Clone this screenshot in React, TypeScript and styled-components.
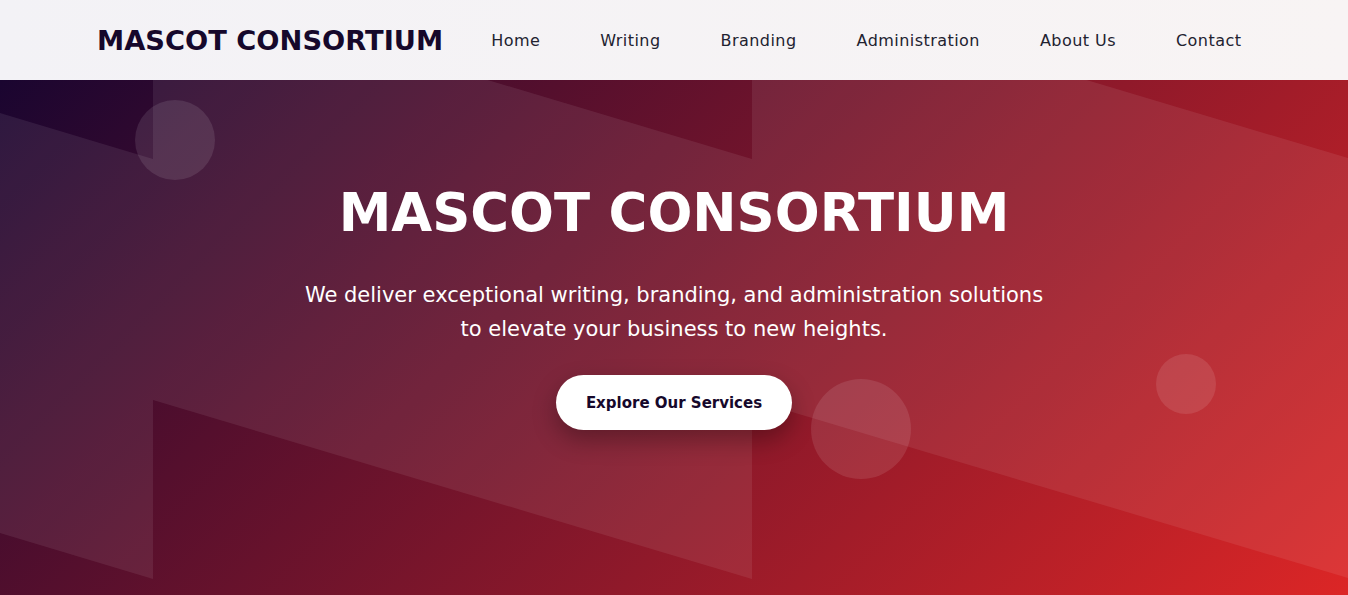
import React from 'react'
import styled, { createGlobalStyle } from 'styled-components'

const NAVY = '#16082b'

const GlobalStyle = createGlobalStyle`
  * {
    box-sizing: border-box;
  }
  body {
    margin: 0;
    font-family: 'DejaVu Sans', 'Open Sans', sans-serif;
    background: #f5f3f5;
  }
`

const Header = styled.header`
  height: 80px;
  display: flex;
  align-items: center;
  padding: 0 97px;
  background: linear-gradient(90deg, #f3f2f6 0%, #f8f4f4 100%);
`

const Logo = styled.div`
  color: ${NAVY};
  font-family: 'DejaVu Sans', sans-serif;
  font-size: 27.3px;
  font-weight: bold;
  white-space: nowrap;
`

const NavList = styled.nav`
  display: flex;
  align-items: center;
  gap: 60px;
  margin-left: 48px;
`

const NavLink = styled.a`
  color: #222230;
  font-family: 'DejaVu Sans', sans-serif;
  font-size: 16px;
  letter-spacing: 0.45px;
  text-decoration: none;
  cursor: pointer;
`

const Hero = styled.section`
  position: relative;
  overflow: hidden;
  height: 515px;
  display: flex;
  flex-direction: column;
  align-items: center;
  padding-top: 101px;
  background: linear-gradient(135deg, #1a0530 0%, #dc2626 100%);
`

const Pattern = styled.svg`
  position: absolute;
  inset: 0;
  width: 100%;
  height: 100%;
`

const Bubble = styled.span<{ $size: number; $x: number; $y: number }>`
  position: absolute;
  left: ${(p) => p.$x - p.$size / 2}px;
  top: ${(p) => p.$y - p.$size / 2}px;
  width: ${(p) => p.$size}px;
  height: ${(p) => p.$size}px;
  border-radius: 50%;
  background: rgba(255, 255, 255, 0.1);
`

const Title = styled.h1`
  position: relative;
  margin: 0;
  color: #fff;
  font-family: 'DejaVu Sans', sans-serif;
  font-size: 52.9px;
  font-weight: bold;
  line-height: 1.2;
`

const Tagline = styled.p`
  position: relative;
  margin: 34px 0 0;
  max-width: 748px;
  color: #fff;
  font-family: 'DejaVu Sans', sans-serif;
  font-size: 21px;
  font-weight: 400;
  line-height: 34px;
  text-align: center;
`

const CtaButton = styled.button`
  position: relative;
  margin-top: 29px;
  height: 55px;
  padding: 0 30px;
  border: none;
  border-radius: 28px;
  background: #fff;
  color: ${NAVY};
  font-family: 'DejaVu Sans', sans-serif;
  font-size: 15px;
  font-weight: bold;
  box-shadow: 0 10px 25px rgba(0, 0, 0, 0.3);
  cursor: pointer;
`

const links = ['Home', 'Writing', 'Branding', 'Administration', 'About Us', 'Contact']

const bubbles = [
  { size: 80, x: 175, y: 60 },
  { size: 100, x: 861, y: 349 },
  { size: 60, x: 1186, y: 304 },
]

export default function App() {
  return (
    <>
      <GlobalStyle />
      <Header>
        <Logo>MASCOT CONSORTIUM</Logo>
        <NavList>
          {links.map((l) => (
            <NavLink key={l}>{l}</NavLink>
          ))}
        </NavList>
      </Header>
      <Hero>
        <Pattern viewBox="0 0 1348 515" preserveAspectRatio="none">
          <polygon
            points="0,33 153,79 153,-100 752,79 752,-100 1351,79 1351,499 752,320 752,499 153,320 153,499 0,453"
            fill="rgba(255,255,255,0.08)"
          />
        </Pattern>
        {bubbles.map((b, i) => (
          <Bubble key={i} $size={b.size} $x={b.x} $y={b.y} />
        ))}
        <Title>MASCOT CONSORTIUM</Title>
        <Tagline>
          We deliver exceptional writing, branding, and administration solutions to elevate your
          business to new heights.
        </Tagline>
        <CtaButton>Explore Our Services</CtaButton>
      </Hero>
    </>
  )
}
